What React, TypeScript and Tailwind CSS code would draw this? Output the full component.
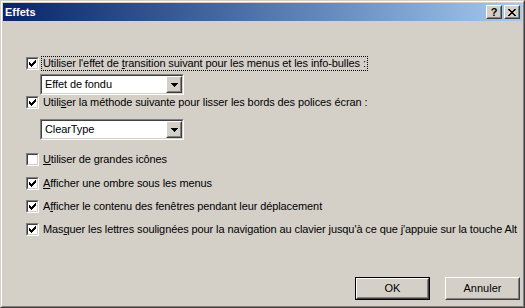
import React from 'react';

const FONT = { fontFamily: '"Liberation Sans", Arial, sans-serif' };

const Check = ({ checked }: { checked: boolean }) => (
  <div className="w-[13px] h-[13px] shrink-0 border border-t-[#808080] border-l-[#808080] border-b-white border-r-white">
    <div className="w-full h-full bg-white border border-t-[#404040] border-l-[#404040] border-b-[#d4d0c8] border-r-[#d4d0c8] flex items-center justify-center">
      {checked && (
        <svg width="7" height="7" viewBox="0 0 7 7" shapeRendering="crispEdges">
          <path d="M0 2h1v3h-1zM1 3h1v3h-1zM2 4h1v3h-1zM3 3h1v3h-1zM4 2h1v3h-1zM5 1h1v3h-1zM6 0h1v3h-1z" fill="#000" />
        </svg>
      )}
    </div>
  </div>
);

const Raised = ({ className, children }: { className: string; children?: React.ReactNode }) => (
  <div className={`border border-t-white border-l-white border-b-[#404040] border-r-[#404040] ${className}`}>
    <div className="w-full h-full bg-[#d4d0c8] border border-t-[#d4d0c8] border-l-[#d4d0c8] border-b-[#808080] border-r-[#808080] flex items-center justify-center">
      {children}
    </div>
  </div>
);

const Combo = ({ value }: { value: string }) => (
  <div className="ml-[37px] w-[144px] h-[21px] border border-t-[#808080] border-l-[#808080] border-b-white border-r-white">
    <div className="w-full h-full bg-white border border-t-[#404040] border-l-[#404040] border-b-[#d4d0c8] border-r-[#d4d0c8] flex items-center">
      <span className="flex-1 pl-[3px] text-[11px] tracking-[-0.1px] text-black leading-none">{value}</span>
      <Raised className="w-[16px] h-[17px]">
        <svg width="7" height="4" viewBox="0 0 7 4" shapeRendering="crispEdges">
          <path d="M0 0h7v1h-7zM1 1h5v1h-5zM2 2h3v1h-3zM3 3h1v1h-1z" fill="#000" />
        </svg>
      </Raised>
    </div>
  </div>
);

const Row = ({ checked, children, focus, mt }: { checked: boolean; children: React.ReactNode; focus?: boolean; mt: string }) => (
  <div className={`flex items-center h-[13px] ml-[23px] ${mt}`}>
    <Check checked={checked} />
    <span
      className={`ml-[3px] px-[1px] text-[11px] tracking-[-0.1px] leading-[13px] text-black whitespace-nowrap ${
        focus ? 'outline outline-1 outline-dotted outline-black' : ''
      }`}
    >
      {children}
    </span>
  </div>
);

const U = ({ children }: { children: React.ReactNode }) => <span className="underline underline-offset-[1px]">{children}</span>;

export default function App() {
  return (
    <div style={FONT} className="w-[525px] h-[308px] bg-[#d4d0c8] border border-t-[#d4d0c8] border-l-[#d4d0c8] border-b-[#404040] border-r-[#404040]">
      <div className="w-full h-full border border-t-white border-l-white border-b-[#808080] border-r-[#808080] p-[1px] flex flex-col">
        {/* title bar */}
        <div className="h-[18px] bg-gradient-to-r from-[#0a246a] to-[#a6caf0] flex items-center pl-[2px] pr-[2px]">
          <span className="flex-1 text-white font-bold text-[11px] leading-none">Effets</span>
          <Raised className="w-[16px] h-[14px]">
            <span className="text-[11px] font-bold leading-none text-black">?</span>
          </Raised>
          <Raised className="w-[16px] h-[14px] ml-[2px]">
            <svg width="8" height="7" viewBox="0 0 8 7" shapeRendering="crispEdges">
              <path d="M0 0h2v1h-2zM6 0h2v1h-2zM1 1h2v1h-2zM5 1h2v1h-2zM2 2h4v1h-4zM3 3h2v1h-2zM2 4h4v1h-4zM1 5h2v1h-2zM5 5h2v1h-2zM0 6h2v1h-2zM6 6h2v1h-2z" fill="#000" />
            </svg>
          </Raised>
        </div>

        {/* body */}
        <div className="flex-1 flex flex-col">
          <Row checked focus mt="mt-[36px]">
            Utiliser l'effet de <U>t</U>ransition suivant pour les menus et les info-bulles :
          </Row>
          <div className="mt-[4px]">
            <Combo value="Effet de fondu" />
          </div>
          <Row checked mt="mt-[1px]">
            Utili<U>s</U>er la méthode suivante pour lisser les bords des polices écran :
          </Row>
          <div className="mt-[10px]">
            <Combo value="ClearType" />
          </div>
          <Row checked={false} mt="mt-[13px]">
            <U>U</U>tiliser de grandes icônes
          </Row>
          <Row checked mt="mt-[11px]">
            <U>A</U>fficher une ombre sous les menus
          </Row>
          <Row checked mt="mt-[10px]">
            A<U>f</U>ficher le contenu des fenêtres pendant leur déplacement
          </Row>
          <Row checked mt="mt-[10px]">
            Mas<U>q</U>uer les lettres soulignées pour la navigation au clavier jusqu'à ce que j'appuie sur la touche Alt
          </Row>

          <div className="mt-auto mb-[5px] flex justify-end gap-[15px] pr-[2px]">
            <div className="w-[75px] h-[23px] border border-black">
              <Raised className="w-full h-full">
                <span className="text-[11px] text-black leading-none">OK</span>
              </Raised>
            </div>
            <Raised className="w-[75px] h-[23px]">
              <span className="text-[11px] text-black leading-none">Annuler</span>
            </Raised>
          </div>
        </div>
      </div>
    </div>
  );
}
